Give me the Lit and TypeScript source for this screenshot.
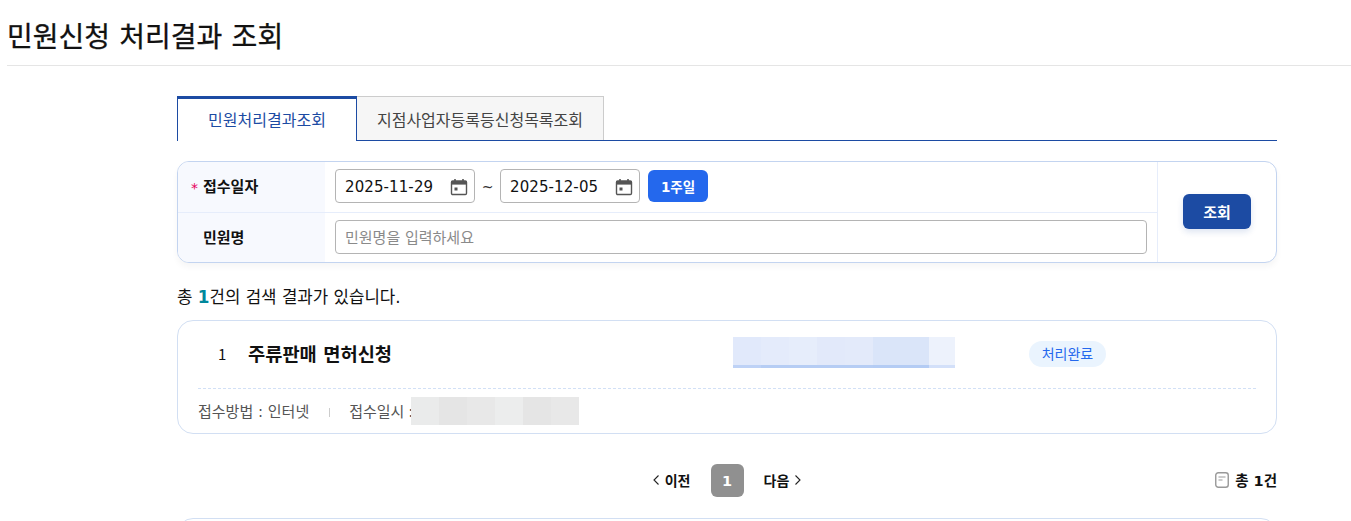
import { LitElement, html, css, svg } from "lit";
import { customElement } from "lit/decorators.js";

const calendar = svg`<svg class="cal" viewBox="0 0 18 18" width="18" height="18" fill="none"><path d="M5 1v3M13 1v3" stroke="#555" stroke-width="1.6"/><rect x="1.5" y="3" width="15" height="13.5" rx="1.2" stroke="#555" stroke-width="1.4"/><rect x="1.5" y="3" width="15" height="3.6" fill="#555"/><rect x="4.5" y="9.5" width="3" height="3" fill="#555"/></svg>`;

const blurA = [
  { w: 28, c: "#e1e9fb", u: "#bed2f6" },
  { w: 28, c: "#e4ebfb", u: "#b6cdf4" },
  { w: 28, c: "#e6edfb", u: "#b6cdf4" },
  { w: 28, c: "#e2e9fa", u: "#b6cdf4" },
  { w: 28, c: "#e3eafa", u: "#b6cdf4" },
  { w: 56, c: "#dae5f9", u: "#b4ccf4" },
  { w: 26, c: "#edf2fc", u: "#d3e0f9" },
];
const blurB = ["#eaebeb", "#e5e5e5", "#e8e8e8", "#eceded", "#e5e5e5", "#e8e8e8"];

@customElement("app-root")
export class AppRoot extends LitElement {
  static styles = css`
    :host { display: block; height: 521px; overflow: hidden; background: #fff; color: #111;
      font-family: "Noto Sans CJK KR", sans-serif; }
    * { box-sizing: border-box; }
    .head { margin-left: 7px; height: 66px; border-bottom: 1px solid #e5e5e5; display: flex; align-items: center; padding-top: 5px; }
    h1 { margin: 0; font-size: 28px; font-weight: 400; line-height: 40px; color: #111; word-spacing: 3px; -webkit-text-stroke: 0.3px #111; }
    .wrap { width: 1100px; margin: 30px 0 0 177px; }
    .tabs { display: flex; height: 45px; border-bottom: 1px solid #1c4ba3; }
    .tab { display: flex; align-items: center; justify-content: center; font-size: 16px; height: 45px; }
    .tab.on { width: 180px; border: 1px solid #1c4ba3; border-top-width: 3px; border-bottom: 0; background: #fff; color: #1c4ba3; padding-bottom: 2px; }
    .tab.off { width: 247px; height: 44px; border: 1px solid #ccc; border-left: 0; border-bottom: 0; background: #f6f6f6; color: #444; }
    .search { margin-top: 20px; height: 102px; border: 1px solid #c3d4f0; border-radius: 12px; display: flex; box-shadow: 0 4px 6px rgba(0,0,0,.04); overflow: hidden; background: #fff; }
    .rows { width: 979px; display: flex; flex-direction: column; }
    .row { display: flex; height: 50px; }
    .row + .row { border-top: 1px solid #e6edfb; }
    .label { width: 147px; background: #f7f9fe; display: flex; align-items: center; padding: 0 0 3px 13px; font-size: 15px; font-weight: 700; gap: 6px; }
    .star { color: #e6005c; width: 6px; font-size: 14px; padding-top: 4px; font-weight: 400; font-family: "DejaVu Sans", sans-serif; }
    .field { flex: 1; display: flex; align-items: center; padding: 0 10px 2px; }
    .date { width: 140px; height: 34px; border: 1px solid #b4b4b4; border-radius: 4px; display: flex; align-items: center; justify-content: space-between; padding: 2px 6px 0 9px; font-size: 15px; letter-spacing: 0.1px; color: #111; font-family: "DejaVu Sans", sans-serif; }
    .cal { display: block; }
    .tilde { width: 25px; padding-top: 2px; text-align: center; font-size: 14px; color: #333; font-family: "DejaVu Sans", sans-serif; }
    .week { margin-left: 8px; width: 60px; height: 32px; background: #2468ed; color: #fff; border: 0; border-radius: 6px; font: inherit; font-size: 13.5px; font-weight: 700; font-family: "DejaVu Sans", "Noto Sans CJK KR", sans-serif; }
    .input { width: 100%; height: 34px; border: 1px solid #b4b4b4; border-radius: 4px; display: flex; align-items: center; padding: 0 9px 1px; font-size: 15px; color: #8a8a8a; font-family: "DejaVu Sans", "Noto Sans CJK KR", sans-serif; }
    .side { flex: 1; border-left: 1px solid #e6edfb; display: flex; align-items: center; justify-content: center; padding-bottom: 2px; }
    .go { width: 68px; height: 35px; background: #1c4ba3; color: #fff; border: 0; border-radius: 6px; font: inherit; font-size: 15px; font-weight: 700; box-shadow: 0 3px 6px rgba(28,75,163,.15); }
    .count { margin-top: 23px; height: 22px; line-height: 22px; font-size: 16.8px; color: #111; font-family: "DejaVu Sans", "Noto Sans CJK KR", sans-serif; }
    .count b { color: #00879c; font-weight: 700; }
    .card { margin-top: 12px; height: 114px; border: 1px solid #d2dff3; border-radius: 16px; padding: 0 20px; }
    .top { height: 68px; border-bottom: 1px dashed #d2e0f6; display: flex; align-items: center; }
    .no { width: 50px; padding: 0 0 2px 20px; font-size: 15px; }
    .title { width: 485px; font-size: 18.7px; font-weight: 700; padding-bottom: 4px; font-family: "DejaVu Sans", "Noto Sans CJK KR", sans-serif; }
    .blur { display: flex; align-items: stretch; }
    .cell { display: block; }
    .a { height: 31px; width: 222px; margin-bottom: 5px; }
    .badge { margin-left: 74px; width: 77px; height: 26px; border-radius: 13px; background: #eaf4fe; color: #2468ed; font-size: 14px; display: flex; align-items: center; justify-content: center; padding-bottom: 1px; margin-bottom: 2px; }
    .meta { height: 44px; display: flex; align-items: center; font-size: 15px; color: #555; font-family: "DejaVu Sans", "Noto Sans CJK KR", sans-serif; }
    .bar { width: 1px; height: 9px; background: #ccc; margin: 2px 19px 0 20px; }
    .b { width: 168px; height: 28px; margin-left: -2px; background: #fff; }
    .metaT { padding-bottom: 2px; }
    .tight { word-spacing: -1px; flex: none; }
    .pager { height: 33px; margin-top: 30px; position: relative; display: flex; justify-content: center; align-items: center; font-size: 14px; font-weight: 700; color: #111; }
    .nav { display: flex; align-items: center; gap: 5px; padding-bottom: 2px; }
    .one { width: 33px; height: 33px; margin: 0 20px; background: #909090; border-radius: 6px; color: #fff; display: flex; align-items: center; justify-content: center; font-size: 14.5px; font-family: "DejaVu Sans", sans-serif; }
    .total { position: absolute; right: 0; top: 0; height: 33px; display: flex; align-items: center; gap: 6px; font-size: 14.5px; padding-bottom: 2px; font-family: "DejaVu Sans", "Noto Sans CJK KR", sans-serif; }
    .next-card { margin-top: 21px; height: 60px; border: 1px solid #d2dff3; border-radius: 16px; }
  `;
  render() {
    return html`
      <div class="head"><h1>민원신청 처리결과 조회</h1></div>
      <div class="wrap">
        <div class="tabs">
          <div class="tab on">민원처리결과조회</div>
          <div class="tab off">지점사업자등록등신청목록조회</div>
        </div>
        <div class="search">
          <div class="rows">
            <div class="row">
              <div class="label"><span class="star">*</span>접수일자</div>
              <div class="field">
                <div class="date">2025-11-29 ${calendar}</div>
                <span class="tilde">~</span>
                <div class="date">2025-12-05 ${calendar}</div>
                <button class="week">1주일</button>
              </div>
            </div>
            <div class="row">
              <div class="label"><span class="star"></span>민원명</div>
              <div class="field"><div class="input">민원명을 입력하세요</div></div>
            </div>
          </div>
          <div class="side"><button class="go">조회</button></div>
        </div>
        <div class="count">총 <b>1</b>건의 검색 결과가 있습니다.</div>
        <div class="card">
          <div class="top">
            <span class="no">1</span>
            <span class="title">주류판매 면허신청</span>
            <div class="blur a">
              ${blurA.map((b) => html`<span class="cell" style="width:${b.w}px;background:${b.c};border-bottom:3px solid ${b.u}"></span>`)}
            </div>
            <span class="badge">처리완료</span>
          </div>
          <div class="meta">
            <span class="metaT">접수방법 : 인터넷</span><span class="bar"></span><span class="metaT tight">접수일시 :</span>
            <div class="blur b">
              ${blurB.map((c) => html`<span class="cell" style="width:28px;background:${c}"></span>`)}
            </div>
          </div>
        </div>
        <div class="pager">
          <span class="nav">
            <svg width="8" height="12" viewBox="0 0 8 12" fill="none"><path d="M6.5 1.5 2 6l4.5 4.5" stroke="#222" stroke-width="1.1"/></svg>이전
          </span>
          <span class="one">1</span>
          <span class="nav">다음
            <svg width="8" height="12" viewBox="0 0 8 12" fill="none"><path d="M1.5 1.5 6 6l-4.5 4.5" stroke="#222" stroke-width="1.1"/></svg>
          </span>
          <span class="total">
            <svg width="14" height="16" viewBox="0 0 14 16" fill="none"><rect x=".75" y=".75" width="12.5" height="14.5" rx="2.5" stroke="#999" stroke-width="1.4"/><path d="M3.5 5h7M3.5 8h4" stroke="#999" stroke-width="1.2"/></svg>
            총 1건
          </span>
        </div>
        <div class="next-card"></div>
      </div>
    `;
  }
}
